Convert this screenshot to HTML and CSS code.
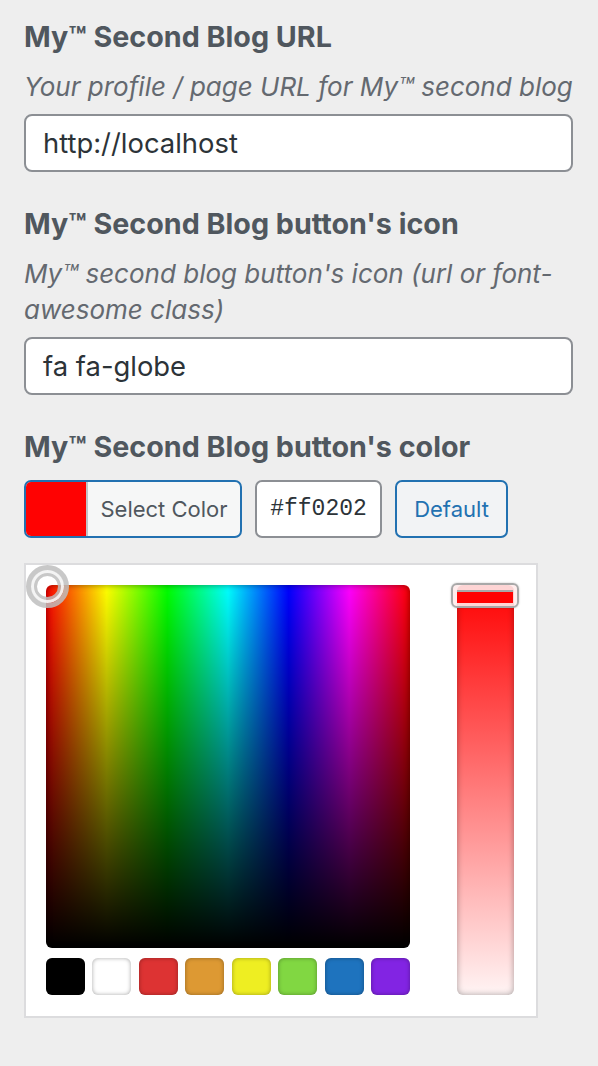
FILE: index.html
```html
<!DOCTYPE html>
<html>
<head>
<meta charset="utf-8">
<link rel="stylesheet" href="styles.css">
</head>
<body>
<div class="page">
  <section class="field field-first">
    <h3 class="label">My™ Second Blog URL</h3>
    <p class="desc">Your profile / page URL for My™ second blog</p>
    <div class="text-input">http://localhost</div>
  </section>
  <section class="field">
    <h3 class="label">My™ Second Blog button's icon</h3>
    <p class="desc">My™ second blog button's icon (url or font-awesome class)</p>
    <div class="text-input">fa fa-globe</div>
  </section>
  <section class="field">
    <h3 class="label">My™ Second Blog button's color</h3>
    <div class="color-row">
      <div class="color-btn"><span class="color-result"></span><span class="color-text">Select Color</span></div>
      <div class="hex-input">#ff0202</div>
      <div class="default-btn">Default</div>
    </div>
    <div class="picker">
      <div class="picker-main">
        <div class="square"><span class="square-handle"></span></div>
        <div class="palette">
          <span class="swatch sw-black"></span>
          <span class="swatch sw-white"></span>
          <span class="swatch sw-red"></span>
          <span class="swatch sw-orange"></span>
          <span class="swatch sw-yellow"></span>
          <span class="swatch sw-green"></span>
          <span class="swatch sw-blue"></span>
          <span class="swatch sw-purple"></span>
        </div>
      </div>
      <div class="slider"><span class="slider-handle"></span></div>
    </div>
  </section>
</div>
</body>
</html>
```
FILE: styles.css
```css
html, body {
  margin: 0;
  padding: 0;
  background: #eeeeee;
}
body {
  font-family: Inter, "Liberation Sans", sans-serif;
  color: #3c434a;
}
.page {
  padding: 20px 24px 0 24px;
  display: flex;
  flex-direction: column;
  gap: 35px;
}
.field {
  display: flex;
  flex-direction: column;
}
.label {
  margin: 0;
  font-size: 28.7px;
  line-height: 34px;
  font-weight: 700;
  color: #50575e;
}
.desc {
  margin: 15px 0 9px 0;
  font-size: 26px;
  line-height: 36px;
  font-style: italic;
  color: #646970;
}
.text-input {
  box-sizing: border-box;
  width: 549px;
  height: 58px;
  border: 2px solid #8c8f94;
  border-radius: 8px;
  background: #fff;
  padding: 0 17px;
  font-size: 27.4px;
  line-height: 54px;
  color: #2c3338;
}
.color-row {
  margin-top: 16px;
  display: flex;
  gap: 13px;
}
.color-btn {
  box-sizing: border-box;
  width: 218px;
  height: 58px;
  border: 2px solid #2271b1;
  border-radius: 7px;
  background: #f6f7f7;
  display: flex;
  overflow: hidden;
}
.color-result {
  width: 60px;
  background: #ff0202;
  border-right: 2px solid #c3c4c7;
}
.color-text {
  flex: 1;
  text-align: center;
  font-size: 22px;
  line-height: 54px;
  color: #50575e;
}
.hex-input {
  box-sizing: border-box;
  width: 127px;
  height: 58px;
  border: 2px solid #8c8f94;
  border-radius: 7px;
  background: #fff;
  text-align: center;
  font-family: "Liberation Mono", "DejaVu Sans Mono", monospace;
  font-size: 23px;
  line-height: 54px;
  color: #2c3338;
}
.default-btn {
  box-sizing: border-box;
  width: 113px;
  height: 58px;
  border: 2px solid #2271b1;
  border-radius: 7px;
  background: #f2f3f5;
  text-align: center;
  font-size: 22px;
  line-height: 54px;
  color: #2271b1;
}
.picker {
  margin-top: 25px;
  box-sizing: border-box;
  width: 514px;
  height: 455px;
  border: 2px solid #dcdcde;
  background: #fff;
  padding: 20px;
  display: flex;
  gap: 47px;
}
.picker-main {
  display: flex;
  flex-direction: column;
  gap: 10px;
}
.square {
  position: relative;
  width: 364px;
  height: 363px;
  border-radius: 6px;
  background:
    linear-gradient(to bottom, rgba(0,0,0,0), #000),
    linear-gradient(to right, #ff0000, #ffff00, #00ff00, #00ffff, #0000ff, #ff00ff, #ff0000);
  box-shadow: inset 0 0 6px rgba(0,0,0,0.45);
}
.square-handle {
  position: absolute;
  left: -20px;
  top: -20px;
  width: 43px;
  height: 43px;
  box-sizing: border-box;
  border-radius: 50%;
  border: 5px solid rgba(190,190,190,0.85);
  box-shadow: inset 0 0 0 3px rgba(255,255,255,0.8), inset 0 0 0 6px rgba(190,190,190,0.85);
}
.palette {
  display: flex;
  justify-content: space-between;
}
.swatch {
  width: 39px;
  height: 37px;
  border-radius: 6px;
  box-shadow: inset 0 0 4px rgba(0,0,0,0.35);
}
.sw-black { background: #000; }
.sw-white { background: #fff; }
.sw-red { background: #dd3333; }
.sw-orange { background: #dd9933; }
.sw-yellow { background: #eeee22; }
.sw-green { background: #81d742; }
.sw-blue { background: #1e73be; }
.sw-purple { background: #8224e3; }
.slider {
  position: relative;
  width: 57px;
  height: 410px;
  border-radius: 6px;
  background: linear-gradient(to bottom, #ff0202, #fff4f4);
  box-shadow: inset 0 0 6px rgba(0,0,0,0.35);
}
.slider-handle {
  position: absolute;
  left: -6px;
  top: -2px;
  width: 68px;
  height: 25px;
  box-sizing: border-box;
  border: 2px solid #a8a8a8;
  border-radius: 6px;
  background: rgba(255,235,235,0.9);
  box-shadow: 0 0 2px rgba(0,0,0,0.25);
}
.slider-handle::after {
  content: "";
  position: absolute;
  left: 4px;
  right: 4px;
  top: 5px;
  height: 13px;
  background: #ff0202;
  border-top: 2px solid #a8a8a8;
  box-sizing: border-box;
}
```
